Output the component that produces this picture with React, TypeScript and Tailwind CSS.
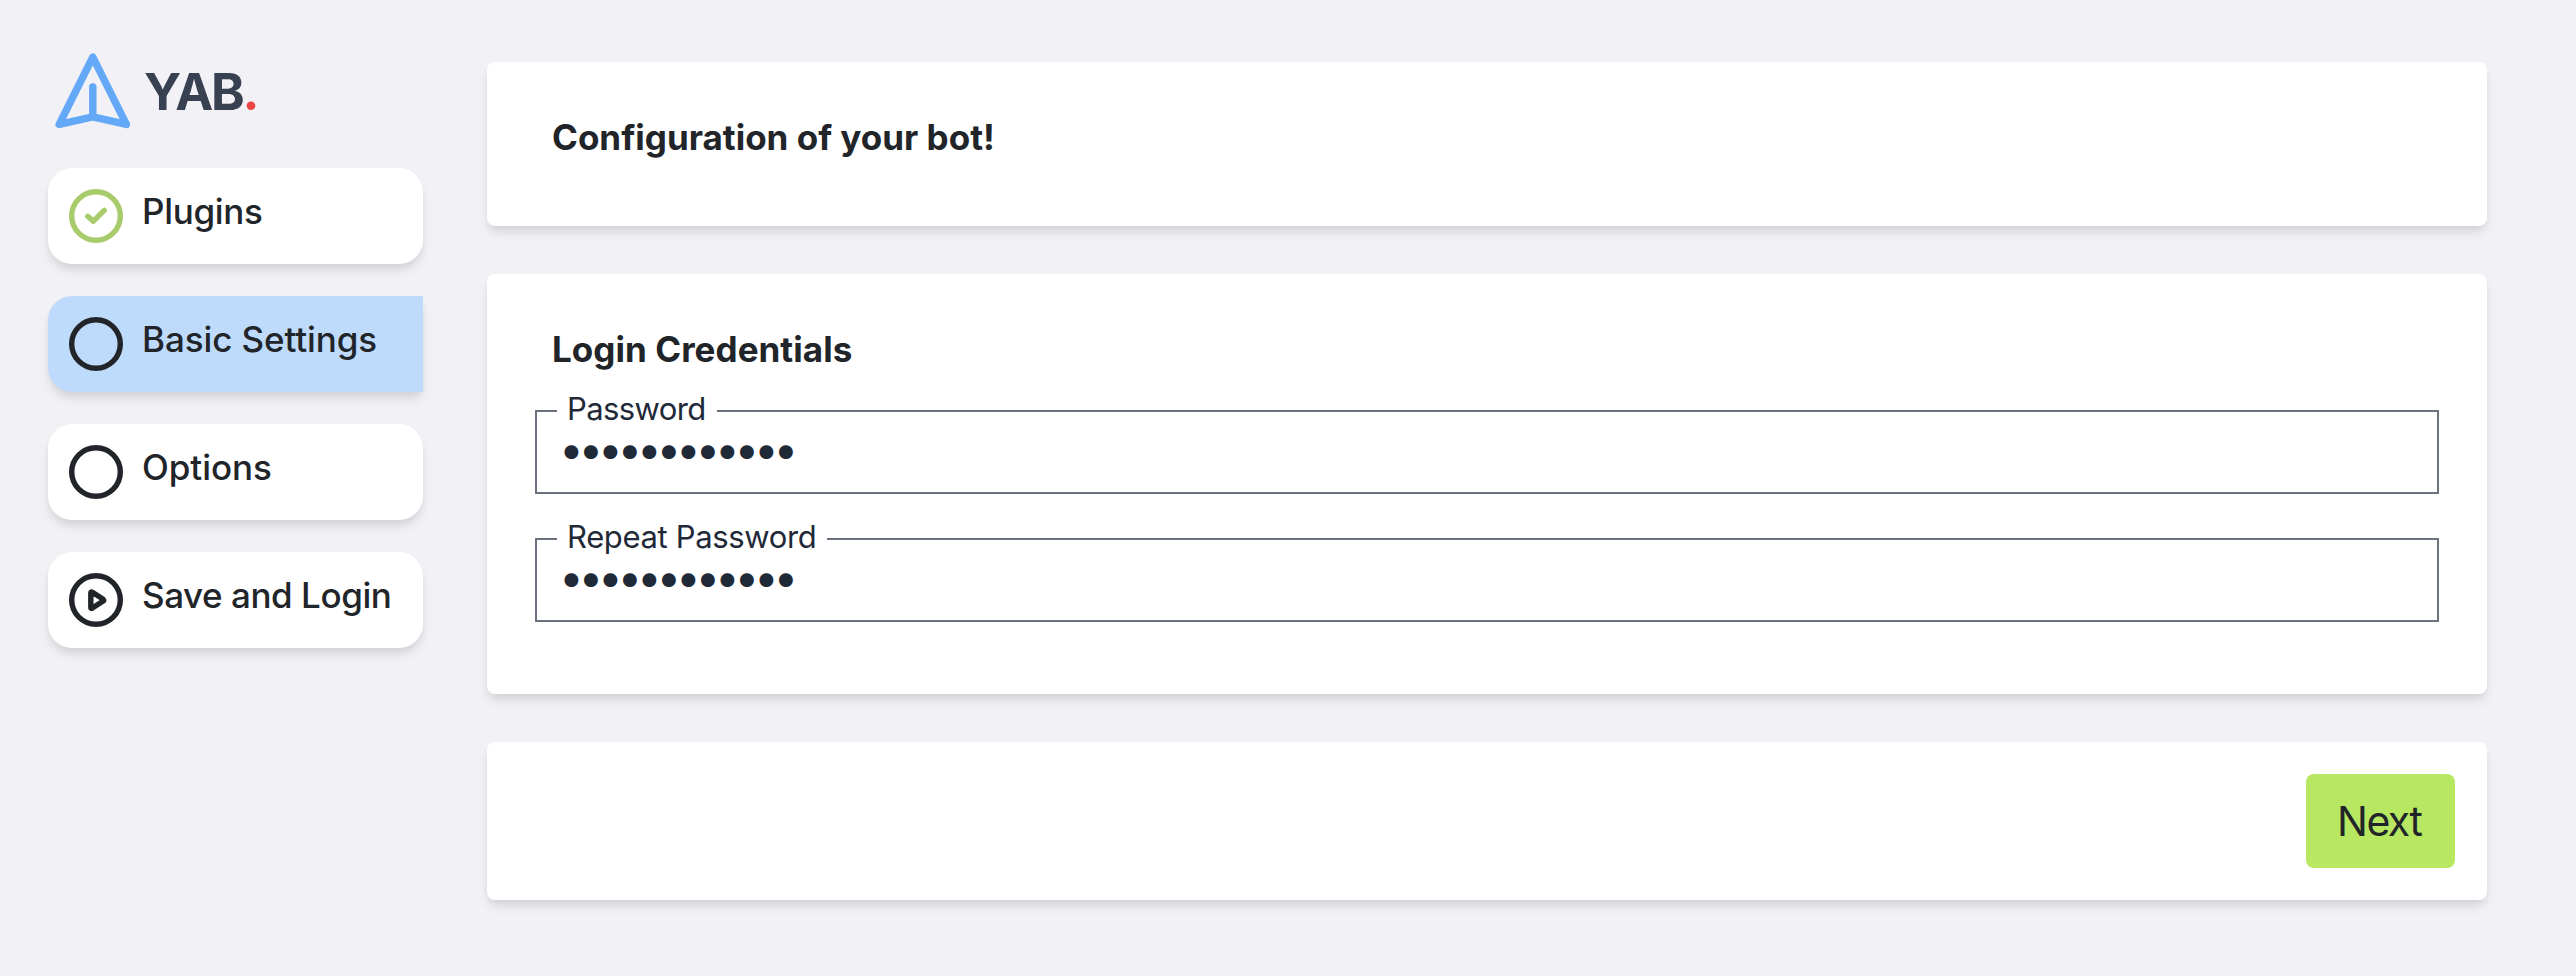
import type { ReactNode } from "react";

const SHADOW = "shadow-[0_8px_12px_-2px_rgba(0,0,0,0.1),0_4px_8px_-2px_rgba(0,0,0,0.06)]";

function StepIcon({ kind }: { kind: "done" | "open" | "play" }) {
  return (
    <svg
      viewBox="0 0 54 54"
      className={`mt-[21px] size-[54px] shrink-0 ${kind === "done" ? "text-[#a8cc6c]" : "text-[#212529]"}`}
      fill="none"
      stroke="currentColor"
      strokeWidth="5.4"
      strokeLinecap="round"
      strokeLinejoin="round"
    >
      <circle cx="27" cy="27" r="24.3" />
      {kind === "done" && <path d="M18.8 27.3 24.2 32.2 35.2 21.4" />}
      {kind === "play" && (
        <path d="M21.8 20V34.4Q21.8 36 23.4 35.1L34.2 28.1Q35.4 27.2 34.2 26.3L23.4 19.3Q21.8 18.4 21.8 20Z" />
      )}
    </svg>
  );
}

function Step({
  kind,
  active,
  tracking,
  children,
}: {
  kind: "done" | "open" | "play";
  active?: boolean;
  tracking: string;
  children: ReactNode;
}) {
  return (
    <li
      className={`flex h-24 items-start gap-[19px] pl-[21px] ${SHADOW} ${
        active ? "rounded-l-3xl bg-[#bfdbfc]" : "rounded-3xl bg-white"
      }`}
    >
      <StepIcon kind={kind} />
      <span className={`whitespace-nowrap text-[35px] leading-[86px] font-medium ${tracking}`}>{children}</span>
    </li>
  );
}

function Card({ className, children }: { className: string; children: ReactNode }) {
  return <section className={`rounded-lg bg-white ${SHADOW} ${className}`}>{children}</section>;
}

function PasswordField({ label, legendClass }: { label: string; legendClass: string }) {
  return (
    <fieldset className="h-[103px] border-2 border-[#6b7280] text-[#1f2937]">
      <legend className={`ml-5 h-10 pb-1 pl-[10px] text-[31px] leading-9 whitespace-nowrap ${legendClass}`}>
        {label}
      </legend>
      <input
        type="password"
        aria-label={label}
        defaultValue="yabpassword1"
        className="block h-9 w-full bg-transparent pl-[22px] text-[44px] leading-9 tracking-[-5.25px] outline-none"
      />
    </fieldset>
  );
}

export default function App() {
  return (
    <div className="flex h-[976px] w-[2576px] bg-[#f2f1f6] font-['Inter',sans-serif] text-[#212529]">
      <aside className="ml-12 w-[375px] shrink-0 pt-[46px]">
        <div className="flex h-[90px] items-center">
          <svg
            viewBox="0 0 24 24"
            className="size-[89.6px] shrink-0 text-[#64a9f8]"
            fill="none"
            stroke="currentColor"
            strokeWidth="2"
            strokeLinecap="round"
            strokeLinejoin="round"
          >
            <path d="M12 19l9 2-9-18-9 18 9-2zm0 0v-8" />
          </svg>
          <span className="ml-[6.5px] pt-[2px] text-[51px] leading-[60px] font-bold tracking-[-2.2px] text-[#374151]">
            YAB<span className="text-[#ef4444]">.</span>
          </span>
        </div>
        <ul className="mt-8 flex flex-col gap-8">
          <Step kind="done" tracking="tracking-[-0.3px]">Plugins</Step>
          <Step kind="open" active tracking="tracking-[-0.1px]">Basic Settings</Step>
          <Step kind="open" tracking="tracking-[-0.05px]">Options</Step>
          <Step kind="play" tracking="tracking-[-0.45px]">Save and Login</Step>
        </ul>
      </aside>
      <main className="ml-16 flex w-[2000px] flex-col gap-12 pt-[62px]">
        <Card className="h-[164px] pt-[51px] pl-[65px]">
          <h1 className="text-[35px] leading-[48px] font-bold">Configuration of your bot!</h1>
        </Card>
        <Card className="h-[420px] px-12 pt-[51px]">
          <h2 className="pl-[17px] text-[35px] leading-[48px] font-bold tracking-[0.05px]">Login Credentials</h2>
          <div className="mt-[18px] flex flex-col gap-[25px]">
            <PasswordField label="Password" legendClass="w-40 tracking-[-0.6px]" />
            <PasswordField label="Repeat Password" legendClass="w-[270px] tracking-[-0.35px]" />
          </div>
        </Card>
        <Card className="flex h-[158px] justify-end p-8">
          <button className="h-[94px] w-[149px] rounded-lg bg-[#b8e762] pt-[2px] pl-[31px] text-left text-[41px] tracking-[-1.5px]">
            Next
          </button>
        </Card>
      </main>
    </div>
  );
}
